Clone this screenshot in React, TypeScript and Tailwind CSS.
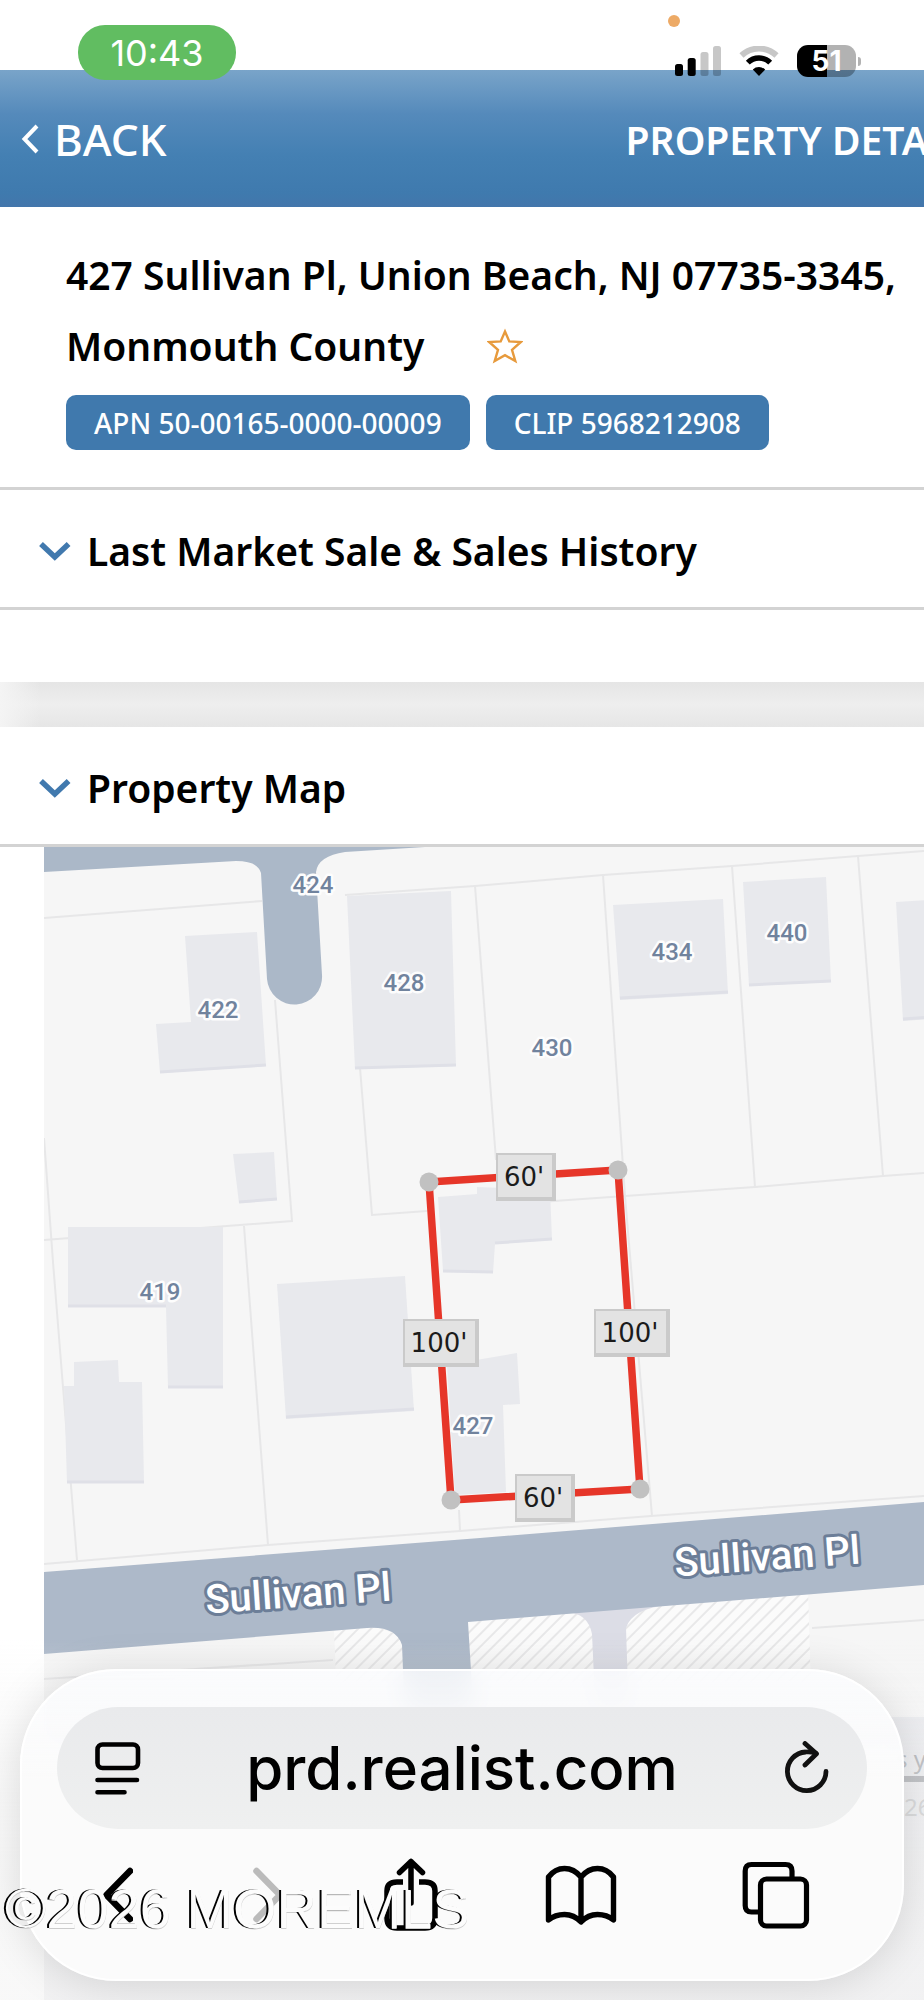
import type { ReactNode } from "react";

function StatusBar() {
  return (
    <div className="absolute inset-x-0 top-0 flex items-start justify-between pt-[25px] pr-[63px] pl-[78px] font-['Inter',sans-serif]">
      <div className="flex h-[55px] w-[158px] items-center justify-center rounded-[27px] bg-[#61bd61] text-[36px] text-white">
        10:43
      </div>
      <div className="relative mt-5 flex h-8 items-center gap-[18px]">
        <span className="absolute -top-[30px] -left-[7px] size-[12px] rounded-full bg-[#edaa66]" />
        <svg width="46" height="30" viewBox="0 0 46 30" aria-label="Signal">
          <rect x="0" y="18" width="8" height="12" rx="2.5" />
          <rect x="12.7" y="12" width="8" height="18" rx="2.5" />
          <rect x="25.5" y="6" width="8" height="24" rx="2.5" opacity=".22" />
          <rect x="38" y="0" width="8" height="30" rx="2.5" opacity=".22" />
        </svg>
        <svg width="40" height="30" viewBox="0 0 40 30" aria-label="Wi-Fi">
          <path d="M2.5 9.5 A25.5 25.5 0 0 1 37.5 9.5" fill="none" stroke="#000" strokeOpacity=".22" strokeWidth="6" />
          <path d="M8.8 16.6 A16 16 0 0 1 31.2 16.6" fill="none" stroke="#000" strokeWidth="5.5" />
          <path d="M20 30 L13.8 23.6 A9 9 0 0 1 26.2 23.6 Z" />
        </svg>
        <div className="flex items-center gap-[2px]">
          <div className="flex h-8 w-[59px] items-center justify-center rounded-[11px] bg-[linear-gradient(to_right,#000_51%,rgba(0,0,0,.3)_51%)] text-[28px] font-bold text-white">
            51
          </div>
          <span className="h-[9px] w-[3px] rounded-r-full bg-black/30" />
        </div>
      </div>
    </div>
  );
}

function SectionHeading({ children }: { children: ReactNode }) {
  return (
    <h2 className="border-b-[3px] border-[#d3d3d3]">
      <button
        type="button"
        aria-expanded="true"
        className="flex h-[117px] w-full items-center gap-4 pt-[5px] pl-[39px] text-left text-[39px] font-semibold"
      >
        <svg width="32" height="20" viewBox="0 0 32 20" fill="none" stroke="#4179ae" strokeWidth="5.5" aria-hidden="true">
          <path d="M2 3 L15.8 16 L29.6 3" />
        </svg>
        {children}
      </button>
    </h2>
  );
}

const lots = [
  "M44 918 L262 901",
  "M345 895 L475 886 L603 875 L732 866 L858 856 L924 851",
  "M475 886 L496 1160",
  "M603 875 L625 1196 L652 1516",
  "M732 866 L755 1187",
  "M858 856 L883 1176",
  "M540 1202 L625 1196 L755 1187 L883 1176 L924 1173",
  "M275 1000 L292 1221 L44 1240",
  "M360 1068 L372 1215 L427 1211",
  "M44 1138 L53 1262 L63 1387 L77 1560",
  "M244 1226 L268 1545",
  "M459 1510 L460 1531",
  "M44 1564 L268 1545 L460 1531 L651 1516 L924 1496",
  "M44 1679 L333 1660",
  "M812 1628 L924 1620",
];

const buildings = [
  "185,936 257,932 266,1066 160,1073 156,1024 191,1022",
  "347,896 451,891 456,1066 355,1069",
  "233,1154 274,1152 277,1200 239,1203",
  "68,1227 223,1227 223,1388 168,1388 166,1307 68,1307",
  "74,1362 118,1360 119,1382 142,1382 144,1483 67,1483 64,1386 74,1386",
  "277,1284 405,1276 414,1411 286,1419",
  "613,905 723,899 728,994 620,1000",
  "743,882 826,877 831,982 749,986",
  "896,902 930,900 930,1019 903,1021",
  "438,1197 477,1194 477,1187 550,1190 552,1240 495,1244 493,1273 443,1271",
  "447,1365 517,1353 520,1404 503,1405 506,1492 455,1495",
];

const eaves = [
  "M160 1072 L266 1065",
  "M355 1068 L456 1065",
  "M239 1202 L277 1199",
  "M68 1306 L166 1306",
  "M168 1387 L223 1387",
  "M67 1482 L144 1482",
  "M286 1417 L414 1409",
  "M620 998 L728 992",
  "M749 985 L831 981",
  "M903 1019 L930 1017",
  "M495 1243 L552 1239",
  "M443 1271 L493 1272",
];

const houseNumbers: [string, number, number][] = [
  ["424", 313, 893],
  ["422", 218, 1018],
  ["428", 404, 991],
  ["430", 552, 1056],
  ["434", 672, 960],
  ["440", 787, 941],
  ["419", 160, 1300],
  ["427", 473, 1434],
];

const corners = [
  [429, 1182],
  [618, 1170],
  [640, 1489],
  [451, 1500],
];

const lengths = [
  { text: "60'", x: 496, y: 1153, w: 60, tx: 524 },
  { text: "100'", x: 403, y: 1319, w: 76, tx: 439 },
  { text: "100'", x: 594, y: 1309, w: 76, tx: 630 },
  { text: "60'", x: 515, y: 1474, w: 60, tx: 543 },
];

function PropertyMap() {
  return (
    <svg
      role="img"
      aria-label="Property map"
      viewBox="44 847 880 1153"
      preserveAspectRatio="xMinYMin slice"
      className="block h-[1153px] w-full bg-[#f6f6f6]"
    >
      <defs>
        <pattern id="hatch" width="9" height="9" patternUnits="userSpaceOnUse" patternTransform="rotate(45)">
          <rect width="9" height="9" fill="#fbfbfb" />
          <rect width="2" height="9" fill="#e8e8e9" />
        </pattern>
      </defs>

      <g fill="none" stroke="#e7e7e8" strokeWidth="2">
        {lots.map((d) => (
          <path key={d} d={d} />
        ))}
      </g>
      <g fill="#e8e9ed">
        {buildings.map((p) => (
          <polygon key={p} points={p} />
        ))}
      </g>
      <g fill="none" stroke="#dfe0e7" strokeWidth="3">
        {eaves.map((d) => (
          <path key={d} d={d} />
        ))}
      </g>

      <path
        fill="#abb8c8"
        d="M44 847 H425 L345 852 Q318 856 316 872 L322 975 A27 27 0 0 1 267 979 L261 873 Q258 861 236 861 L44 872 Z"
      />

      <path fill="url(#hatch)" d="M334 1631 L375 1626 L410 1640 V1720 H338 Z" />
      <path fill="url(#hatch)" d="M462 1618 L600 1600 L808 1590 L812 1720 H462 Z" />
      <path fill="#dcdde6" d="M560 1605 H670 Q632 1608 626 1628 L629 1720 H596 L592 1634 Q588 1613 566 1612 Z" />
      <path
        fill="#adb9c9"
        d="M44 1572 L480 1538 L924 1502 V1585 L468 1622 L474 1720 H405 L402 1645 Q396 1626 367 1628 L44 1654 Z"
      />

      <polygon
        points={corners.map((c) => c.join(",")).join(" ")}
        fill="none"
        stroke="#e63629"
        strokeWidth="7.5"
      />
      {corners.map(([x, y]) => (
        <circle key={x} cx={x} cy={y} r="9.5" fill="#c1c1c1" />
      ))}

      <g
        fill="#71839d"
        stroke="#fdfdfd"
        strokeWidth="5"
        strokeLinejoin="round"
        paintOrder="stroke"
        textAnchor="middle"
        className="font-['Roboto',sans-serif] text-[24px] font-medium"
      >
        {houseNumbers.map(([n, x, y]) => (
          <text key={n} x={x} y={y}>
            {n}
          </text>
        ))}
      </g>

      {lengths.map((l) => (
        <g key={l.x}>
          <rect x={l.x} y={l.y} width={l.w} height="48" fill="#cacaca" />
          <rect x={l.x + 2} y={l.y + 2} width={l.w - 6} height="42" fill="#e3e3e3" />
          <text
            x={l.tx}
            y={l.y + 33}
            textAnchor="middle"
            fill="#1b1b1b"
            className="font-['DejaVu_Sans',sans-serif] text-[26px]"
          >
            {l.text}
          </text>
        </g>
      ))}

      <g
        fill="#fff"
        stroke="#6c7e98"
        strokeWidth="6"
        strokeLinejoin="round"
        paintOrder="stroke"
        textAnchor="middle"
        className="font-['Roboto',sans-serif] text-[40px] font-medium"
      >
        <text x="299" y="1607" transform="rotate(-4 299 1607)">
          Sullivan Pl
        </text>
        <text x="768" y="1570" transform="rotate(-4 768 1570)">
          Sullivan Pl
        </text>
      </g>

      <path d="M44 1717 H924 V2000 H44 Z" fill="#e6e7ec" />
      <path d="M880 1776 H924 V1782 H880 Z" fill="#6f737c" />
      <g className="font-['Noto_Sans',sans-serif] text-[24px]">
        <text x="896" y="1768" fill="#777b83">
          s y
        </text>
        <text x="904" y="1816" fill="#a6a8ac">
          26
        </text>
      </g>
    </svg>
  );
}

function BrowserBar() {
  return (
    <nav
      aria-label="Browser"
      className="fixed inset-x-5 bottom-[19px] rounded-[96px] border-2 border-white bg-[linear-gradient(to_bottom,rgba(251,252,254,.82),#fbfbfb_35%)] px-[35px] pt-9 shadow-[0_4px_44px_rgba(0,0,0,0.13)] backdrop-blur-md"
    >
      <div className="flex h-[122px] items-center rounded-full bg-linear-to-b from-[#e9eaec] to-[#eff0f0] px-[38px]">
        <button type="button" aria-label="Page settings">
          <svg width="46" height="54" viewBox="0 0 46 54" fill="none" stroke="#000" strokeWidth="4.6" strokeLinecap="round">
            <rect x="2.5" y="3.5" width="40.5" height="23.5" rx="5" />
            <path d="M2.5 39 H42 M2.5 51.3 H29.5" />
          </svg>
        </button>
        <input
          type="text"
          aria-label="Address"
          defaultValue="prd.realist.com"
          className="w-0 flex-1 bg-transparent text-center font-['Inter',sans-serif] text-[60px] leading-[80px] font-medium text-black outline-none"
        />
        <button type="button" aria-label="Reload">
          <svg width="46" height="54" viewBox="0 0 46 54" fill="none" stroke="#111" strokeWidth="4.8" strokeLinecap="round" strokeLinejoin="round">
            <path d="M32.5 12 C29 11 26 10.500 22.700 11 A19.300 19.300 0 1 0 43 30.5" />
            <path d="M22 2.5 L33.5 12.8 L22 24" />
          </svg>
        </button>
      </div>
      <div className="-mx-[14px] grid h-[150px] grid-cols-[150fr_150fr_136fr_206fr_184fr] justify-items-center pt-7 pr-[13px]">
        <button type="button" aria-label="Back" className="flex h-[76px] items-center">
          <svg width="30" height="56" viewBox="0 0 30 56" fill="none" stroke="#000" strokeWidth="6.5" strokeLinecap="round" strokeLinejoin="round">
            <path d="M27 4 L3.500 28 L27 52" />
          </svg>
        </button>
        <button type="button" aria-label="Forward" className="flex h-[76px] items-center" disabled>
          <svg width="30" height="56" viewBox="0 0 30 56" fill="none" stroke="#bbb" strokeWidth="6.5" strokeLinecap="round" strokeLinejoin="round">
            <path d="M3.500 4 L27 28 L3.500 52" />
          </svg>
        </button>
        <button type="button" aria-label="Share" className="flex h-[76px] items-center">
          <svg width="56" height="74" viewBox="0 0 56 74" fill="none" stroke="#000" strokeWidth="5.5" strokeLinecap="round" strokeLinejoin="round">
            <path d="M28 3.5 V45 M16.5 14.5 L28 3.5 L39.5 14.5" />
            <path d="M20 24 H14 Q4 24 4 33 V60 Q4 70 14 70 H42 Q52 70 52 60 V33 Q52 24 42 24 H36" strokeLinecap="butt" />
          </svg>
        </button>
        <button type="button" aria-label="Bookmarks" className="flex h-[76px] items-center">
          <svg width="72" height="60" viewBox="0 0 72 60" fill="none" stroke="#000" strokeWidth="5.4" strokeLinejoin="round">
            <path d="M36 12 Q29 3.5 19.5 3.5 Q10 3.5 3.5 12 V55 Q10 49.5 19.5 49.5 Q29 49.5 36 57 Q43 49.5 52.5 49.5 Q62 49.5 68.5 55 V12 Q62 3.5 52.5 3.5 Q43 3.5 36 12 V57" />
          </svg>
        </button>
        <button type="button" aria-label="Tabs" className="flex h-[76px] items-center">
          <svg width="68" height="68" viewBox="0 0 68 68" fill="none" stroke="#000" strokeWidth="5.2" strokeLinejoin="round">
            <path d="M16 51 H9.5 Q3.2 51 3.2 44.5 V10 Q3.2 3.5 9.5 3.5 H43.5 Q50 3.5 50 10 V16" />
            <rect x="18.5" y="18" width="46" height="47" rx="6" />
          </svg>
        </button>
      </div>
    </nav>
  );
}

export default function App() {
  return (
    <div className="relative min-h-screen overflow-hidden bg-white font-['Noto_Sans',sans-serif] text-black">
      <header className="mt-[70px] flex h-[137px] items-center justify-between overflow-hidden bg-[linear-gradient(to_bottom,#79a4c9,#558abb_32%,#4480b3_62%,#3f7aae_90%,#4376ab)] pl-[21px] text-white">
        <button type="button" className="flex items-center gap-[15px] text-[44px] font-medium">
          <svg width="18" height="30" viewBox="0 0 18 30" fill="none" stroke="#fff" strokeWidth="4" aria-hidden="true">
            <path d="M16 2 L3.5 15 L16 28" />
          </svg>
          BACK
        </button>
        <h1 className="-mr-1 pt-1 text-[39px] font-semibold whitespace-nowrap">PROPERTY DETA</h1>
      </header>
      <StatusBar />

      <main>
        <section className="border-b-[3px] border-[#d3d3d3] pt-8 pr-5 pb-[37px] pl-[66px]">
          <p className="text-[39px] leading-[71px] font-semibold">
            427 Sullivan Pl, Union Beach, NJ 07735-3345, Monmouth County
            <button type="button" aria-label="Add to favorites" className="ml-[63px] inline-block align-[-3px]">
              <svg width="36" height="36" viewBox="0 0 36 36" fill="none" stroke="#e79a3c" strokeWidth="2.4" strokeLinejoin="miter">
                <path d="M18 3.500 L22.300 13.400 L33.800 14 L25 21.800 L28.300 33 L18 27.200 L7.700 33 L11 21.800 L2.200 14 L13.700 13.400 Z" />
              </svg>
            </button>
          </p>
          <div className="mt-[14px] flex gap-4 text-[28px] font-medium text-white">
            <span className="flex h-[55px] items-center rounded-[10px] bg-[#4079ad] px-7">APN 50-00165-0000-00009</span>
            <span className="flex h-[55px] items-center rounded-[10px] bg-[#4079ad] px-7">CLIP 5968212908</span>
          </div>
        </section>

        <section>
          <SectionHeading>Last Market Sale &amp; Sales History</SectionHeading>
          <div className="h-[72px]" />
        </section>

        <div className="h-[45px] bg-[linear-gradient(to_right,#f4f4f4,transparent_40px),linear-gradient(to_bottom,#e5e5e5,#eeeeee_50%,#e6e6e6)]" />

        <section>
          <SectionHeading>Property Map</SectionHeading>
          <div className="pl-11">
            <PropertyMap />
          </div>
        </section>
      </main>

      <div className="pointer-events-none fixed inset-x-0 bottom-0 h-[360px] bg-[linear-gradient(to_bottom,rgba(246,246,246,0),rgba(246,246,246,.6)_35%,rgba(246,246,246,.7)_60%)]" />
      <BrowserBar />
      <p className="pointer-events-none fixed bottom-[63px] left-[5px] font-['Liberation_Sans',sans-serif] text-[56px] leading-none whitespace-nowrap text-[#fcfcfc] [text-shadow:-2px_0_0_#000,0_1px_0_#ccc]">
        ©2026 MOREMLS
      </p>
    </div>
  );
}
